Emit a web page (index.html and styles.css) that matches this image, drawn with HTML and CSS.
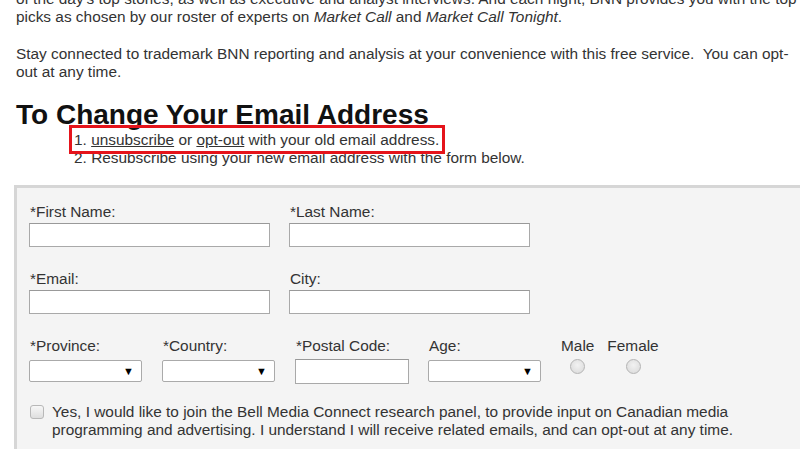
FILE: index.html
```html
<!DOCTYPE html>
<html>
<head>
<meta charset="utf-8">
<link rel="stylesheet" href="styles.css">
</head>
<body>
<div class="page">
  <p class="intro">of the day's top stories, as well as executive and analyst interviews. And each night, BNN provides you with the top picks as chosen by our roster of experts on <em>Market Call</em> and <em>Market Call Tonight</em>.</p>
  <p class="intro">Stay connected to trademark BNN reporting and analysis at your convenience with this free service.&nbsp; You can opt-out at any time.</p>
  <h1 class="title">To Change Your Email Address</h1>
  <ol class="steps">
    <li><span class="highlight"><a href="#">unsubscribe</a> or <a href="#">opt-out</a> with your old email address.</span></li>
    <li>Resubscribe using your new email address with the form below.</li>
  </ol>
  <form class="signup">
    <div class="row">
      <div class="field wide"><label>*First Name:</label><input type="text" class="text"></div>
      <div class="field wide"><label>*Last Name:</label><input type="text" class="text"></div>
    </div>
    <div class="row">
      <div class="field wide"><label>*Email:</label><input type="text" class="text"></div>
      <div class="field wide"><label>City:</label><input type="text" class="text"></div>
    </div>
    <div class="row small-row">
      <div class="field narrow"><label>*Province:</label><div class="select"><span class="arrow">▼</span></div></div>
      <div class="field narrow"><label>*Country:</label><div class="select"><span class="arrow">▼</span></div></div>
      <div class="field narrow"><label>*Postal Code:</label><input type="text" class="text postal"></div>
      <div class="field narrow"><label>Age:</label><div class="select"><span class="arrow">▼</span></div></div>
      <div class="gender">
        <div class="radio-opt"><span class="rlabel">Male</span><span class="radio"></span></div>
        <div class="radio-opt"><span class="rlabel">Female</span><span class="radio"></span></div>
      </div>
    </div>
    <div class="consent">
      <span class="checkbox"></span>
      <p class="consent-text">Yes, I would like to join the Bell Media Connect research panel, to provide input on Canadian media programming and advertising. I understand I will receive related emails, and can opt-out at any time.</p>
    </div>
  </form>
</div>
</body>
</html>
```
FILE: styles.css
```css
html, body {
  margin: 0;
  padding: 0;
  background: #ffffff;
  overflow: hidden;
}
body {
  font-family: "Liberation Sans", Arial, sans-serif;
  font-size: 15.4px;
  line-height: 18px;
  color: #333333;
}
.page {
  padding: 0 0 0 16px;
  margin-top: -10px;
}
.intro {
  margin: 0 0 19px 0;
  width: 784px;
}
.title {
  font-size: 28px;
  line-height: 30px;
  font-weight: bold;
  color: #111111;
  margin: 0 0 1px 0;
}
.steps {
  list-style-position: inside;
  margin: 0 0 18px 0;
  padding: 0 0 0 58px;
}
.steps li {
  line-height: 18px;
}
.highlight {
  outline: 3px solid #e5141b;
  outline-offset: 3px;
  margin-left: -16px;
  padding-left: 16px;
}
.steps a {
  color: #333333;
  text-decoration: underline;
}
.signup {
  margin-left: -2px;
  width: 900px;
  background: #f4f4f4;
  border-top: 3px solid #d6d6d6;
  border-left: 3px solid #d6d6d6;
  padding: 15px 0 40px 12px;
  box-sizing: border-box;
}
.row {
  display: flex;
  gap: 19px;
  margin-bottom: 23px;
}
.field {
  display: flex;
  flex-direction: column;
}
.field label {
  display: block;
  padding-left: 1px;
  height: 18px;
  margin-bottom: 2px;
  color: #333333;
}
.wide {
  width: 241px;
}
.text {
  display: block;
  box-sizing: border-box;
  width: 241px;
  height: 24px;
  margin: 0;
  border: 1px solid #a9a9a9;
  border-top-color: #999;
  background: #ffffff;
  padding: 0;
}
.small-row {
  gap: 20px;
  margin-bottom: 19px;
}
.narrow {
  width: 113px;
}
.select {
  box-sizing: border-box;
  width: 113px;
  height: 22px;
  margin-top: 3px;
  border: 1px solid #aaaaaa;
  border-radius: 2px;
  background: #ffffff;
  display: flex;
  justify-content: flex-end;
  align-items: center;
  padding-right: 7px;
}
.arrow {
  font-size: 11px;
  line-height: 10px;
  color: #000;
}
.postal {
  width: 114px;
  height: 25px;
  margin-top: 2px;
}
.gender {
  display: flex;
  gap: 13px;
}
.radio-opt {
  display: flex;
  flex-direction: column;
  align-items: center;
}
.rlabel {
  height: 18px;
}
.radio {
  width: 13px;
  height: 13px;
  border-radius: 50%;
  border: 1px solid #b4b4b4;
  background: radial-gradient(circle at 50% 40%, #f2f2f2 0%, #d8d8d8 100%);
  margin-top: 4px;
}
.consent {
  display: flex;
  align-items: flex-start;
  gap: 8px;
  padding-left: 1px;
}
.checkbox {
  flex: none;
  box-sizing: border-box;
  width: 14px;
  height: 14px;
  margin-top: 2px;
  border: 1px solid #b8b8b8;
  border-radius: 3px;
  background: linear-gradient(#f7f7f7, #dedede);
}
.consent-text {
  margin: 0;
  width: 720px;
}
```
